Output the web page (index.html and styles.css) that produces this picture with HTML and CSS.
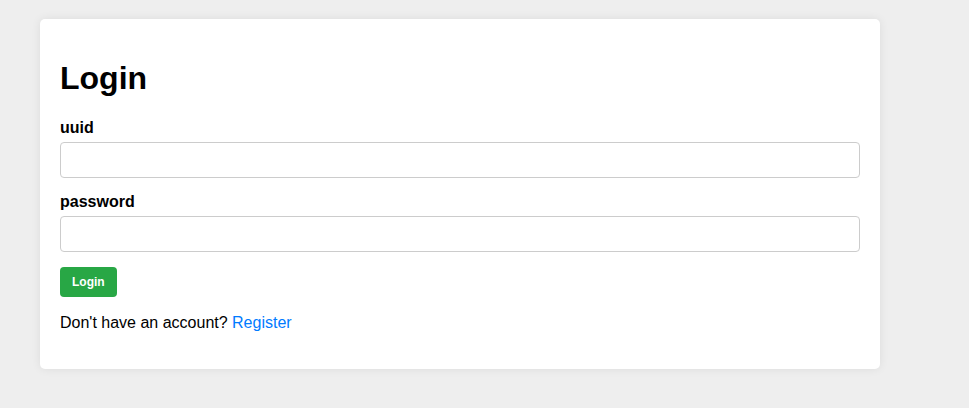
FILE: index.html
```html
<!DOCTYPE html>
<html>
<head>
<meta charset="utf-8">
<link rel="stylesheet" href="styles.css">
</head>
<body>
<div class="card">
  <h1 class="title">Login</h1>
  <form class="form">
    <label class="label" for="uuid">uuid</label>
    <input class="input" id="uuid" type="text">
    <label class="label" for="password">password</label>
    <input class="input" id="password" type="password">
    <button class="btn" type="button">Login</button>
  </form>
  <p class="note">Don't have an account? <a class="link" href="#">Register</a></p>
</div>
</body>
</html>
```
FILE: styles.css
```css
html, body {
  margin: 0;
  background: #eeeeee;
}
body {
  padding: 19px 40px;
  font-family: "Liberation Sans", Arial, sans-serif;
  color: #000;
}
.card {
  width: 800px;
  padding: 20px;
  background: #fff;
  border-radius: 5px;
  box-shadow: 0 0 10px rgba(0, 0, 0, 0.08);
}
.title {
  font-size: 32px;
  font-weight: bold;
  margin: 21px 0 22px;
  line-height: 37px;
}
.form {
  display: block;
}
.label {
  display: block;
  font-weight: bold;
  font-size: 16px;
  line-height: 18px;
  margin-bottom: 5px;
}
.input {
  display: block;
  box-sizing: border-box;
  width: 100%;
  height: 36px;
  padding: 8px;
  border: 1px solid #cccccc;
  border-radius: 4px;
  font-size: 16px;
  margin: 0 0 15px;
  font-family: inherit;
}
.btn {
  display: block;
  height: 30px;
  padding: 0 12px;
  background: #28a745;
  color: #fff;
  border: none;
  border-radius: 4px;
  font-family: "Liberation Sans", Arial, sans-serif;
  font-size: 12px;
  font-weight: bold;
  cursor: pointer;
}
.note {
  font-size: 16px;
  line-height: 18px;
  margin: 17px 0 17px;
}
.link {
  color: #007bff;
  text-decoration: none;
}
```
